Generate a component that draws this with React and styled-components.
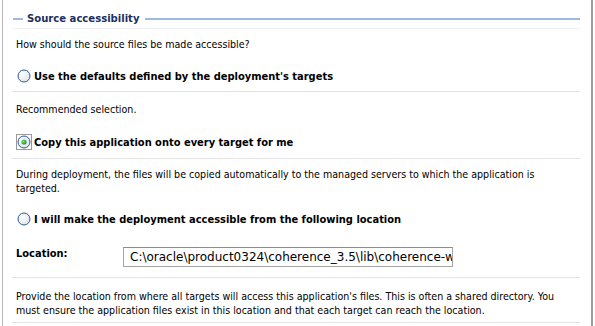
import React from "react";
import styled, { createGlobalStyle } from "styled-components";

const GlobalStyle = createGlobalStyle`
  html, body {
    margin: 0;
    padding: 0;
    background: #ffffff;
  }
  body {
    font-family: "DejaVu Sans Condensed", "DejaVu Sans", sans-serif;
    font-size: 10.6px;
    color: #000000;
  }
`;

const Frame = styled.div`
  box-sizing: border-box;
  width: 591px;
  height: 326px;
  margin-left: 2px;
  border-left: 1px solid #b9b9b9;
  border-right: 2px solid #9c9c9c;
  overflow: hidden;
`;

const Section = styled.div`
  display: flex;
  flex-direction: column;
  padding: 12px 11px 0 9px;
`;

const Header = styled.div`
  display: flex;
  align-items: center;
  gap: 4px;
  height: 14px;
`;

const HeaderLine = styled.div`
  height: 2px;
  background: #9dbadd;
  flex: ${(p) => (p.$grow ? 1 : "0 0 10px")};
  margin-left: 1px;
`;

const HeaderTitle = styled.span`
  font-weight: bold;
  font-size: 11.2px;
  color: #1b2f63;
  line-height: 14px;
`;

const Rule = styled.div`
  height: 1px;
  background: ${(p) => p.$color || "#e3e3e3"};
  margin-top: ${(p) => p.$top}px;
`;

const Text = styled.p`
  margin: ${(p) => p.$top}px 0 0 4px;
  line-height: 14px;
`;

const RadioRow = styled.label`
  display: flex;
  align-items: center;
  gap: 2px;
  height: 16px;
  margin: ${(p) => p.$top}px 0 0 4px;
  font-weight: bold;
  font-size: 11px;
`;

const FieldRow = styled.div`
  display: flex;
  align-items: flex-start;
  height: 20px;
  margin: ${(p) => p.$top}px 0 0 4px;
`;

const FieldLabel = styled.span`
  font-weight: bold;
  font-size: 11px;
  line-height: 14px;
  width: 107px;
`;

const Input = styled.div`
  box-sizing: border-box;
  width: 330px;
  height: 20px;
  border: 1px solid #a5a5a5;
  border-top-color: #8c8c8c;
  padding: 0 0 0 6px;
  display: flex;
  align-items: center;
  font-family: "DejaVu Sans", sans-serif;
  font-size: 12px;
  white-space: nowrap;
  overflow: hidden;
`;

const Radio = ({ checked, focused }) => (
  <svg width="16" height="16" viewBox="0 0 16 16">
    <defs>
      <radialGradient id="rb" cx="0.35" cy="0.35" r="0.7">
        <stop offset="0" stopColor="#ffffff" />
        <stop offset="1" stopColor="#dfe3ea" />
      </radialGradient>
      <radialGradient id="dot" cx="0.4" cy="0.4" r="0.6">
        <stop offset="0" stopColor="#7be37b" />
        <stop offset="1" stopColor="#1f9a1f" />
      </radialGradient>
    </defs>
    {focused && (
      <rect
        x="0.5"
        y="0.5"
        width="15"
        height="15"
        fill="none"
        stroke="#333"
        strokeWidth="1"
        strokeDasharray="1 1"
      />
    )}
    <circle cx="8" cy="8" r="6" fill="url(#rb)" stroke="#2f5b95" strokeWidth="1" />
    {checked && <circle cx="8" cy="8" r="2.6" fill="url(#dot)" />}
  </svg>
);

export default function App() {
  return (
    <>
      <GlobalStyle />
      <Frame>
        <Section>
          <Header>
            <HeaderLine />
            <HeaderTitle>Source accessibility</HeaderTitle>
            <HeaderLine $grow />
          </Header>
          <Rule $top={2} $color="#eef0f3" />
          <Text $top={8}>How should the source files be made accessible?</Text>
          <RadioRow $top={17}>
            <Radio />
            Use the defaults defined by the deployment's targets
          </RadioRow>
          <Rule $top={7} />
          <Text $top={10}>Recommended selection.</Text>
          <RadioRow $top={18}>
            <Radio checked focused />
            Copy this application onto every target for me
          </RadioRow>
          <Rule $top={8} />
          <Text $top={8}>
            During deployment, the files will be copied automatically to the
            managed servers to which the application is
            <br />
            targeted.
          </Text>
          <RadioRow $top={16}>
            <Radio />
            I will make the deployment accessible from the following location
          </RadioRow>
          <FieldRow $top={20}>
            <FieldLabel>Location:</FieldLabel>
            <Input>C:\oracle\product0324\coherence_3.5\lib\coherence-web-spi.war</Input>
          </FieldRow>
          <Rule $top={10} />
          <Text $top={11}>
            Provide the location from where all targets will access this
            application's files. This is often a shared directory. You
            <br />
            must ensure the application files exist in this location and that
            each target can reach the location.
          </Text>
          <Rule $top={5} />
        </Section>
      </Frame>
    </>
  );
}
